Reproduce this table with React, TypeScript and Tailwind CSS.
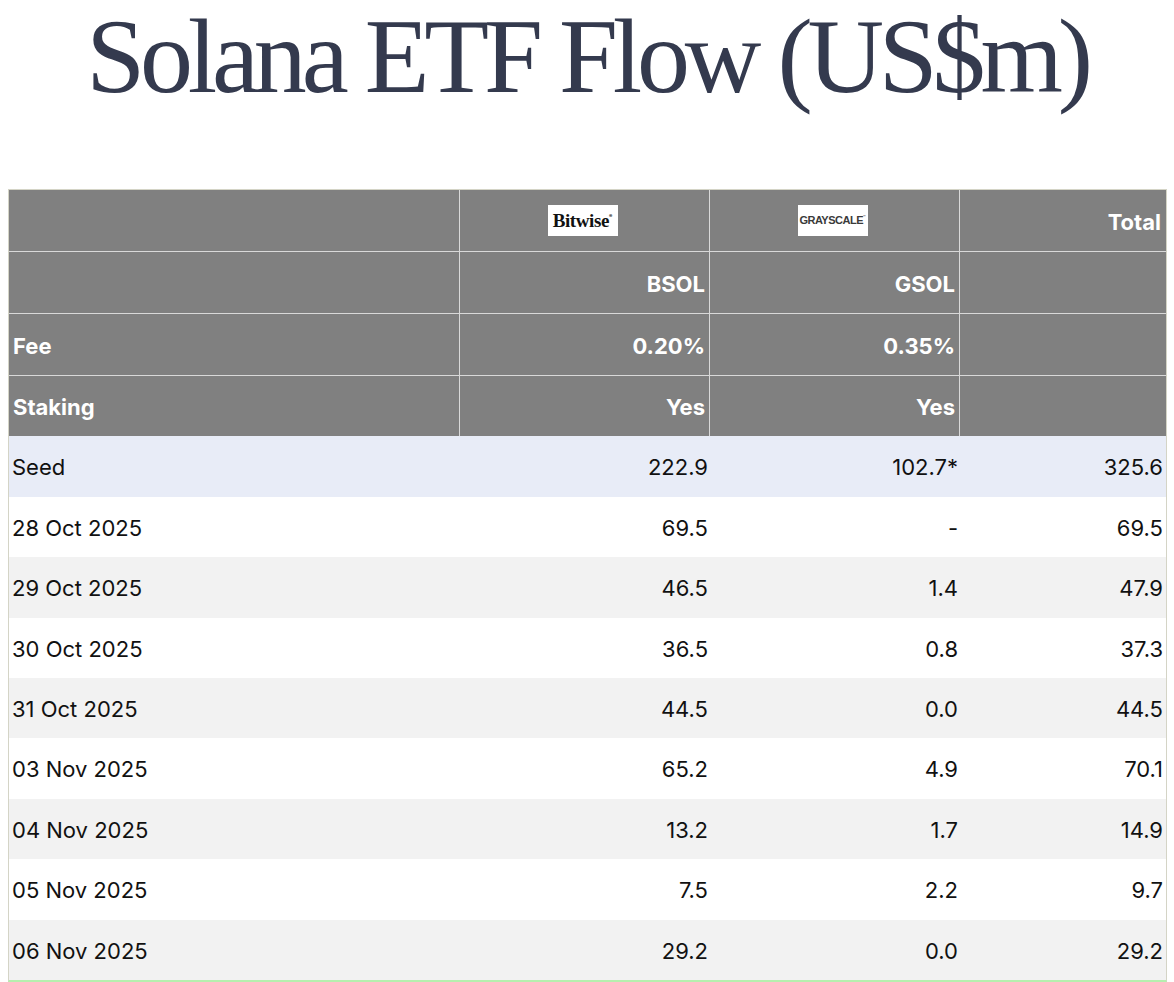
const rows = [
  { label: "Seed", bsol: "222.9", gsol: "102.7*", total: "325.6", h: "h-[61px]", bg: "bg-[#e8ecf7]" },
  { label: "28 Oct 2025", bsol: "69.5", gsol: "-", total: "69.5", h: "h-[60px]", bg: "bg-white" },
  { label: "29 Oct 2025", bsol: "46.5", gsol: "1.4", total: "47.9", h: "h-[61px]", bg: "bg-[#f2f2f2]" },
  { label: "30 Oct 2025", bsol: "36.5", gsol: "0.8", total: "37.3", h: "h-[60px]", bg: "bg-white" },
  { label: "31 Oct 2025", bsol: "44.5", gsol: "0.0", total: "44.5", h: "h-[60px]", bg: "bg-[#f2f2f2]" },
  { label: "03 Nov 2025", bsol: "65.2", gsol: "4.9", total: "70.1", h: "h-[61px]", bg: "bg-white" },
  { label: "04 Nov 2025", bsol: "13.2", gsol: "1.7", total: "14.9", h: "h-[60px]", bg: "bg-[#f2f2f2]" },
  { label: "05 Nov 2025", bsol: "7.5", gsol: "2.2", total: "9.7", h: "h-[61px]", bg: "bg-white" },
  { label: "06 Nov 2025", bsol: "29.2", gsol: "0.0", total: "29.2", h: "h-[60px]", bg: "bg-[#f2f2f2]" },
];

function BitwiseLogo() {
  return (
    <div className="flex h-[31px] w-[70px] items-center justify-center bg-white">
      <span className="font-['Liberation_Serif',serif] text-[19px] font-bold leading-none tracking-[-0.4px] text-[#111]">
        Bitwise
      </span>
      <span className="mb-[8px] text-[5px] leading-none text-[#111]">®</span>
    </div>
  );
}

function GrayscaleLogo() {
  return (
    <div className="flex h-[31px] w-[70px] items-center justify-center bg-white">
      <span className="font-['Liberation_Sans',sans-serif] text-[11px] leading-none tracking-[-0.5px] text-[#3a3a3a]">
        GRAYSCALE
      </span>
      <span className="mb-[6px] text-[4px] leading-none text-[#3a3a3a]">™</span>
    </div>
  );
}

function HeadRow({
  cells,
  last,
}: {
  cells: React.ReactNode[];
  last?: boolean;
}) {
  const widths = ["w-[451px]", "w-[250px]", "w-[250px]", "w-[206px]"];
  return (
    <div
      className={`flex ${last ? "h-[60px]" : "h-[62px] border-b border-[#d9d9d9]"}`}
    >
      {cells.map((c, i) => (
        <div
          key={i}
          className={`${widths[i]} flex items-center pt-[3px] ${i === 0 ? "justify-start pl-[4px]" : "justify-end"} ${
            i === 3 ? "pr-[5px]" : "border-r border-[#d9d9d9] pr-[4px]"
          }`}
        >
          {c}
        </div>
      ))}
    </div>
  );
}

export default function App() {
  return (
    <div className="min-h-screen bg-white">
      <h1 className="pt-[4px] text-center font-['Liberation_Serif',serif] text-[106px] leading-none tracking-[-5.2px] text-[#343a4e]">
        Solana ETF Flow (US$m)
      </h1>

      <div className="ml-[8px] mt-[79px] w-[1159px] border-x border-t border-[#d4d4c6] border-b-2 border-b-[#b5efae] font-['Inter',sans-serif] text-[22px]">
        {/* Header */}
        <div className="bg-[#808080] font-bold text-white">
          <HeadRow
            cells={[
              "",
              <div className="flex w-full justify-center pb-[3px]" key="b">
                <BitwiseLogo />
              </div>,
              <div className="flex w-full justify-center pb-[3px]" key="g">
                <GrayscaleLogo />
              </div>,
              "Total",
            ]}
          />
          <HeadRow cells={["", "BSOL", "GSOL", ""]} />
          <HeadRow cells={["Fee", "0.20%", "0.35%", ""]} />
          <HeadRow cells={["Staking", "Yes", "Yes", ""]} last />
        </div>

        {/* Body */}
        {rows.map((r) => (
          <div key={r.label} className={`flex items-center pt-[2px] ${r.h} ${r.bg} text-[#111]`}>
            <div className="w-[451px] pl-[3px]">{r.label}</div>
            <div className="w-[250px] pr-[2px] text-right">{r.bsol}</div>
            <div className="w-[250px] pr-[2px] text-right">{r.gsol}</div>
            <div className="w-[206px] pr-[3px] text-right">{r.total}</div>
          </div>
        ))}
      </div>
    </div>
  );
}
